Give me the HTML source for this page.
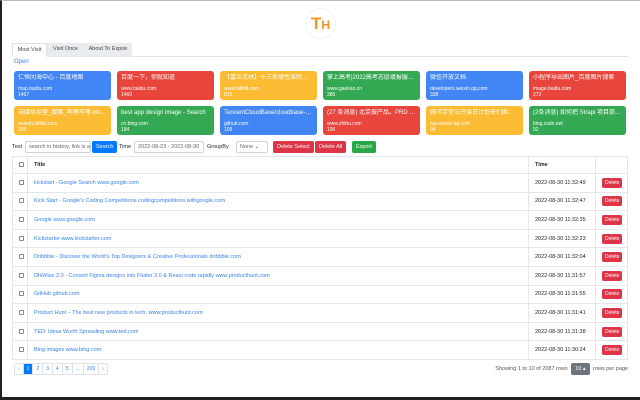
<!DOCTYPE html>
<html><head><meta charset="utf-8"><style>
*{box-sizing:border-box;margin:0;padding:0}
body{width:640px;height:400px;overflow:hidden;background:#fff;font-family:"Liberation Sans","Noto Sans CJK SC",sans-serif;font-size:6px;color:#212529;position:relative;white-space:nowrap}
.frame{position:absolute;left:0;top:0;width:640px;height:400px;border-left:2px solid #222;border-bottom:3px solid #222;border-top:1px solid #bbb;pointer-events:none}
.logo{position:absolute;left:305px;top:8px;width:31px;height:31px;border-radius:50%;border:1px solid #f2f2f2;color:#f7931e;font-weight:bold;font-size:17px;text-align:center;line-height:29px}
.tabs{position:absolute;left:12px;top:43px;width:616px;height:14px;border-bottom:1px solid #dee2e6}
.tab{position:absolute;top:0;height:14px;line-height:13px;font-size:5.5px;color:#444;text-align:center}
.open{position:absolute;left:14px;top:59px;color:#3b82f6;font-size:6px}
.card{position:absolute;width:97px;border-radius:3px;color:#fff;padding:3px 4px;height:29px;overflow:hidden}
.card .t{font-size:6px;white-space:nowrap;overflow:hidden;text-overflow:ellipsis;line-height:8px}
.card .u{font-size:5px;margin-top:4px;line-height:6px}
.card .n{font-size:5px;line-height:6px}
.b{background:#4285f4}.r{background:#e8453c}.y{background:#fbbc34}.g{background:#34a853}
.tool{position:absolute;top:141px;height:12px;font-size:5.5px;line-height:12px;overflow:hidden}
.inp{border:1px solid #ced4da;border-radius:2px;color:#666;padding:0 3px;line-height:10px}
.btn{color:#fff;border-radius:2px;text-align:center;padding:0 4px}
table{position:absolute;left:12px;top:156px;width:616px;border-collapse:collapse;table-layout:fixed}
td,th{border:1px solid #e3e6ea;font-size:5.5px;height:18.6px;padding:0 6px;text-align:left;white-space:nowrap;overflow:hidden;line-height:6px}
th{height:17px;font-weight:bold}
td a{color:#3b82f6}
.cb{width:5px;height:5px;border:1px solid #888;display:inline-block;border-radius:1px;vertical-align:middle}
.del{background:#dc3545;color:#fff;border-radius:2px;padding:2px 3px;font-size:5px;display:inline-block;line-height:6px}
.pg{position:absolute;left:14px;top:363px;height:12px;display:flex;border:1px solid #dee2e6;border-radius:2px}
.pg span{display:block;height:10px;line-height:10px;padding:0 3px;font-size:5px;color:#3b82f6;border-right:1px solid #dee2e6}
.pg .a{background:#007bff;color:#fff}
.info{position:absolute;right:12px;top:363px;height:12px;line-height:12px;font-size:5.5px;color:#555}
.sel{display:inline-block;background:#6c757d;color:#fff;padding:0 4px;border-radius:2px;margin:0 2px}
</style></head><body>
<div class="logo">T<span style="font-size:12px">H</span></div>
<div class="tabs">
<div class="tab" style="left:0;width:35px;border:1px solid #dee2e6;border-bottom-color:#fff;background:#fff">Most Visit</div>
<div class="tab" style="left:35px;width:37px;background:#e9ecef">Visit Once</div>
<div class="tab" style="left:72px;width:48px;background:#e9ecef">About To Expire</div>
</div>
<div class="open">Open</div>
<div class="card b" style="left:14px;top:71px"><div class="t">仁恒闵海中心 - 百度地图</div><div class="u">map.baidu.com</div><div class="n">1467</div></div>
<div class="card r" style="left:117px;top:71px"><div class="t">百度一下，你就知道</div><div class="u">www.baidu.com</div><div class="n">1460</div></div>
<div class="card y" style="left:220px;top:71px"><div class="t">【富兰克林】十三条德性准则中卑双...</div><div class="u">www.bilibili.com</div><div class="n">810</div></div>
<div class="card g" style="left:323px;top:71px"><div class="t">掌上高考|2022高考志愿填报服务平台|...</div><div class="u">www.gaokao.cn</div><div class="n">385</div></div>
<div class="card b" style="left:426px;top:71px"><div class="t">微信开放文档</div><div class="u">developers.weixin.qq.com</div><div class="n">338</div></div>
<div class="card r" style="left:529px;top:71px"><div class="t">小程序导出图片_百度图片搜索</div><div class="u">image.baidu.com</div><div class="n">272</div></div>
<div class="card y" style="left:14px;top:106px"><div class="t">自媒体运营_搜索_哔哩哔哩-bilibili</div><div class="u">search.bilibili.com</div><div class="n">255</div></div>
<div class="card g" style="left:117px;top:106px"><div class="t">best app design image - Search</div><div class="u">cn.bing.com</div><div class="n">184</div></div>
<div class="card b" style="left:220px;top:106px"><div class="t">TencentCloudBase/cloudbase-extensi...</div><div class="u">github.com</div><div class="n">109</div></div>
<div class="card r" style="left:323px;top:106px"><div class="t">(27 条消息) 北京做产品。PRD (产品需...</div><div class="u">www.zhihu.com</div><div class="n">106</div></div>
<div class="card y" style="left:426px;top:106px"><div class="t">腾讯学堂公开课日计划来们国内国际</div><div class="u">mp.weixin.qq.com</div><div class="n">94</div></div>
<div class="card g" style="left:529px;top:106px"><div class="t">(2条消息) 如何把 Strapi 项目部署到服...</div><div class="u">blog.csdn.net</div><div class="n">92</div></div>

<div class="tool" style="left:12px">Text</div>
<div class="tool inp" style="left:25px;width:66px">search in history, link is a</div>
<div class="tool btn" style="left:92px;background:#007bff">Search</div>
<div class="tool" style="left:119px">Time</div>
<div class="tool inp" style="left:134px;width:70px">2022-08-23 - 2022-08-30</div>
<div class="tool" style="left:207px">GroupBy</div>
<div class="tool inp" style="left:236px;width:32px">None ⌄</div>
<div class="tool btn" style="left:273px;background:#dc3545">Delete Select</div>
<div class="tool btn" style="left:315px;background:#dc3545">Delete All</div>
<div class="tool btn" style="left:352px;background:#28a745">Export</div>

<table>
<colgroup><col style="width:15px"><col><col style="width:67px"><col style="width:32px"></colgroup>
<tr><th><span class="cb"></span></th><th>Title</th><th>Time</th><th></th></tr>
<tr><td><span class="cb"></span></td><td><a>kickstart - Google Search www.google.com</a></td><td>2022-08-30 11:32:49</td><td><span class="del">Delete</span></td></tr>
<tr><td><span class="cb"></span></td><td><a>Kick Start - Google's Coding Competitions codingcompetitions.withgoogle.com</a></td><td>2022-08-30 11:32:47</td><td><span class="del">Delete</span></td></tr>
<tr><td><span class="cb"></span></td><td><a>Google www.google.com</a></td><td>2022-08-30 11:32:35</td><td><span class="del">Delete</span></td></tr>
<tr><td><span class="cb"></span></td><td><a>Kickstarter www.kickstarter.com</a></td><td>2022-08-30 11:32:23</td><td><span class="del">Delete</span></td></tr>
<tr><td><span class="cb"></span></td><td><a>Dribbble - Discover the World's Top Designers &amp; Creative Professionals dribbble.com</a></td><td>2022-08-30 11:32:04</td><td><span class="del">Delete</span></td></tr>
<tr><td><span class="cb"></span></td><td><a>DhiWise 2.0 - Convert Figma designs into Flutter 3.0 &amp; React code rapidly www.producthunt.com</a></td><td>2022-08-30 11:31:57</td><td><span class="del">Delete</span></td></tr>
<tr><td><span class="cb"></span></td><td><a>GitHub github.com</a></td><td>2022-08-30 11:31:55</td><td><span class="del">Delete</span></td></tr>
<tr><td><span class="cb"></span></td><td><a>Product Hunt – The best new products in tech. www.producthunt.com</a></td><td>2022-08-30 11:31:41</td><td><span class="del">Delete</span></td></tr>
<tr><td><span class="cb"></span></td><td><a>TED: Ideas Worth Spreading www.ted.com</a></td><td>2022-08-30 11:31:38</td><td><span class="del">Delete</span></td></tr>
<tr><td><span class="cb"></span></td><td><a>Bing images www.bing.com</a></td><td>2022-08-30 11:30:24</td><td><span class="del">Delete</span></td></tr>
</table>

<div class="pg"><span>‹</span><span class="a">1</span><span>2</span><span>3</span><span>4</span><span>5</span><span>...</span><span>209</span><span style="border:0">›</span></div>
<div class="info">Showing 1 to 10 of 2087 rows <span class="sel">10 ▴</span> rows per page</div>
<div class="frame"></div>
</body></html>
